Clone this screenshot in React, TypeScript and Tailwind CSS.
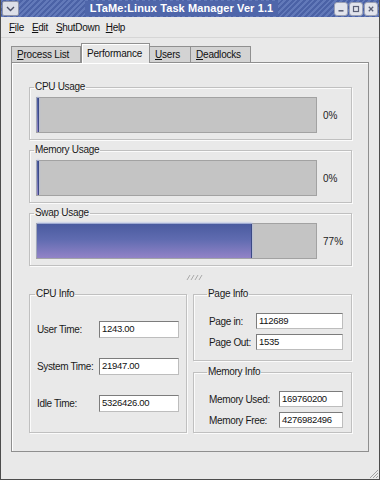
import React, { ReactNode } from 'react';

const ui = "font-['Liberation_Sans',Arial,sans-serif]";

// underlined mnemonic letter
function Mn({ c }: { c: string }) {
  return <span className="underline underline-offset-[1px]">{c}</span>;
}

function Group({ title, className = '', children }: { title: string; className?: string; children: ReactNode }) {
  return (
    <fieldset
      className={`min-w-0 border border-[#c0c0c0] shadow-[inset_1px_1px_0_#fbfbfb,1px_1px_0_#fbfbfb] ${className}`}
    >
      <legend className="-ml-[2px] px-[1px] text-[10px] leading-[12px] tracking-[-0.3px] text-[#1a1a1a]">{title}</legend>
      {children}
    </fieldset>
  );
}

function UsageBar({ title, pct }: { title: string; pct: number }) {
  return (
    <Group title={title} className="px-[6px] pt-[4px] pb-[6px]">
      <div className="flex items-center">
        <div className="h-[36px] w-[281px] border border-[#a2a2a2] bg-[#c4c4c4]">
          <div
            className="h-full border-r border-[#3c4a86] bg-[linear-gradient(#4a5b9f,#5f6bb0_45%,#9283c7)] shadow-[0_-1px_2px_#9fb0ea]"
            style={{ width: pct > 0 ? `${pct}%` : '2px' }}
          />
        </div>
        <span className="ml-[6px] text-[10px] text-[#222]">{pct}%</span>
      </div>
    </Group>
  );
}

function Field({ label, value, labelW, inputW, h = 16 }: { label: string; value: string; labelW: string; inputW: string; h?: number }) {
  return (
    <div className="flex items-center">
      <span className={`${labelW} text-[10px] tracking-[-0.35px] text-[#1a1a1a]`}>{label}</span>
      <div
        className={`${inputW} ${h === 17 ? 'h-[17px]' : 'h-[16px]'} flex items-center overflow-hidden border border-[#7c7c7c] border-b-[#bdbdbd] border-r-[#bdbdbd] bg-white pl-[2px] text-[9.5px] tracking-[-0.3px] text-[#111]`}
      >
        {value}
      </div>
    </div>
  );
}

export default function App() {
  return (
    <div className={`${ui} flex h-[480px] w-[380px] flex-col overflow-hidden border-x border-b border-[#4d4d4d] bg-[#e9e9e9]`}>
      {/* title bar */}
      <div className="flex h-[17px] items-center bg-[repeating-linear-gradient(135deg,#6279b9_0_2px,#4b62a6_2px_4px)]">
        <div className="ml-[1px] flex h-[15px] w-[17px] items-center justify-center rounded-[2px] border border-[#8d93a8] bg-[#dcdfe8]">
          <svg width="9" height="6" viewBox="0 0 9 6">
            <path d="M1 1 L4.5 4.5 L8 1" fill="none" stroke="#4a4f66" strokeWidth="1.4" />
          </svg>
        </div>
        <div className="flex flex-1 justify-center pl-[10px]">
          <span className="bg-[#4f66aa] px-[5px] text-[11px] font-bold leading-[15px] tracking-[0.1px] text-white">
            LTaMe:Linux Task Manager Ver 1.1
          </span>
        </div>
        <div className="mr-[1px] flex gap-[1px]">
          {['min', 'max', 'close'].map((k) => (
            <div
              key={k}
              className="flex h-[14px] w-[14px] items-center justify-center rounded-[3px] border border-[#9aa0b4] bg-[#e2e4ec]"
            >
              <svg width="8" height="8" viewBox="0 0 8 8">
                {k === 'min' && <rect x="1.5" y="5" width="5" height="1.6" fill="#5a5f76" />}
                {k === 'max' && <rect x="1.5" y="1.5" width="5" height="5" fill="none" stroke="#5a5f76" strokeWidth="1.2" />}
                {k === 'close' && <path d="M1.8 1.8 L6.2 6.2 M6.2 1.8 L1.8 6.2" stroke="#5a5f76" strokeWidth="1.3" />}
              </svg>
            </div>
          ))}
        </div>
      </div>

      {/* menu bar */}
      <div className="flex h-[21px] items-center gap-[8px] border-b border-[#d6d6d6] pl-[8px] text-[10px] tracking-[-0.3px] text-[#111]">
        <span><Mn c="F" />ile</span>
        <span><Mn c="E" />dit</span>
        <span><Mn c="S" />hutDown</span>
        <span className="ml-[-2px]"><Mn c="H" />elp</span>
      </div>

      {/* notebook */}
      <div className="ml-[10px] mt-[5px] flex h-[19px] items-end text-[10px] tracking-[-0.2px] text-[#111]">
        <div className="flex h-[16px] w-[70px] items-center border border-b-0 border-[#909090] bg-[#d3d3d3] pl-[5px]">
          <span><Mn c="P" />rocess List</span>
        </div>
        <div className="relative z-10 -mb-px flex h-[20px] w-[69px] items-start border border-b-0 border-[#909090] bg-[#e9e9e9] pl-[5px] pt-[2px] shadow-[inset_1px_1px_0_#fff]">
          <span>Performance</span>
        </div>
        <div className="flex h-[16px] w-[41px] items-center border border-b-0 border-l-0 border-[#909090] bg-[#d3d3d3] pl-[5px]">
          <span><Mn c="U" />sers</span>
        </div>
        <div className="flex h-[16px] w-[60px] items-center border border-b-0 border-l-0 border-[#909090] bg-[#d3d3d3] pl-[5px]">
          <span><Mn c="D" />eadlocks</span>
        </div>
      </div>

      <div className="ml-[10px] flex h-[390px] w-[358px] flex-col border border-[#8f8f8f] pl-[17px] pr-[16px] pt-[18px] shadow-[inset_1px_1px_0_#fff]">
        <div className="flex flex-col gap-[4px]">
          <UsageBar title="CPU Usage" pct={0} />
          <UsageBar title="Memory Usage" pct={0} />
          <UsageBar title="Swap Usage" pct={77} />
        </div>

        {/* splitter handle */}
        <div className="flex h-[22px] items-center justify-center pl-[8px]">
          <svg width="17" height="5" viewBox="0 0 17 5">
            {[0, 4, 8, 12].map((x) => (
              <path key={x} d={`M${x + 1} 5 L${x + 4} 0`} stroke="#a9a9a9" strokeWidth="1" />
            ))}
          </svg>
        </div>

        <div className="grid grid-cols-[158px_159px] gap-x-[6px]">
          <Group title="CPU Info" className="px-[7px] pt-[21px] pb-[20px]">
            <div className="flex flex-col gap-[20px]">
              <Field label="User Time:" value="1243.00" labelW="w-[63px]" inputW="w-[81px]" h={17} />
              <Field label="System Time:" value="21947.00" labelW="w-[63px]" inputW="w-[81px]" h={17} />
              <Field label="Idle Time:" value="5326426.00" labelW="w-[63px]" inputW="w-[81px]" h={17} />
            </div>
          </Group>
          <div className="flex flex-col gap-[5px]">
            <Group title="Page Info" className="pl-[15px] pt-[13px] pb-[10px]">
              <div className="flex flex-col gap-[5px]">
                <Field label="Page in:" value="112689" labelW="w-[47px]" inputW="w-[87px]" />
                <Field label="Page Out:" value="1535" labelW="w-[47px]" inputW="w-[87px]" />
              </div>
            </Group>
            <Group title="Memory Info" className="pl-[15px] pt-[13px] pb-[4px]">
              <div className="flex flex-col gap-[5px]">
                <Field label="Memory Used:" value="169760200" labelW="w-[70px]" inputW="w-[64px]" />
                <Field label="Memory Free:" value="4276982496" labelW="w-[70px]" inputW="w-[64px]" />
              </div>
            </Group>
          </div>
        </div>
      </div>

      {/* resize grip */}
      <div className="flex flex-1 items-end justify-end pb-[1px] pr-[1px]">
        <svg width="10" height="10" viewBox="0 0 10 10">
          {[2, 5, 8].map((o) => (
            <path key={o} d={`M${o} 10 L10 ${o}`} stroke="#a0a0a0" strokeWidth="1" />
          ))}
        </svg>
      </div>
    </div>
  );
}
